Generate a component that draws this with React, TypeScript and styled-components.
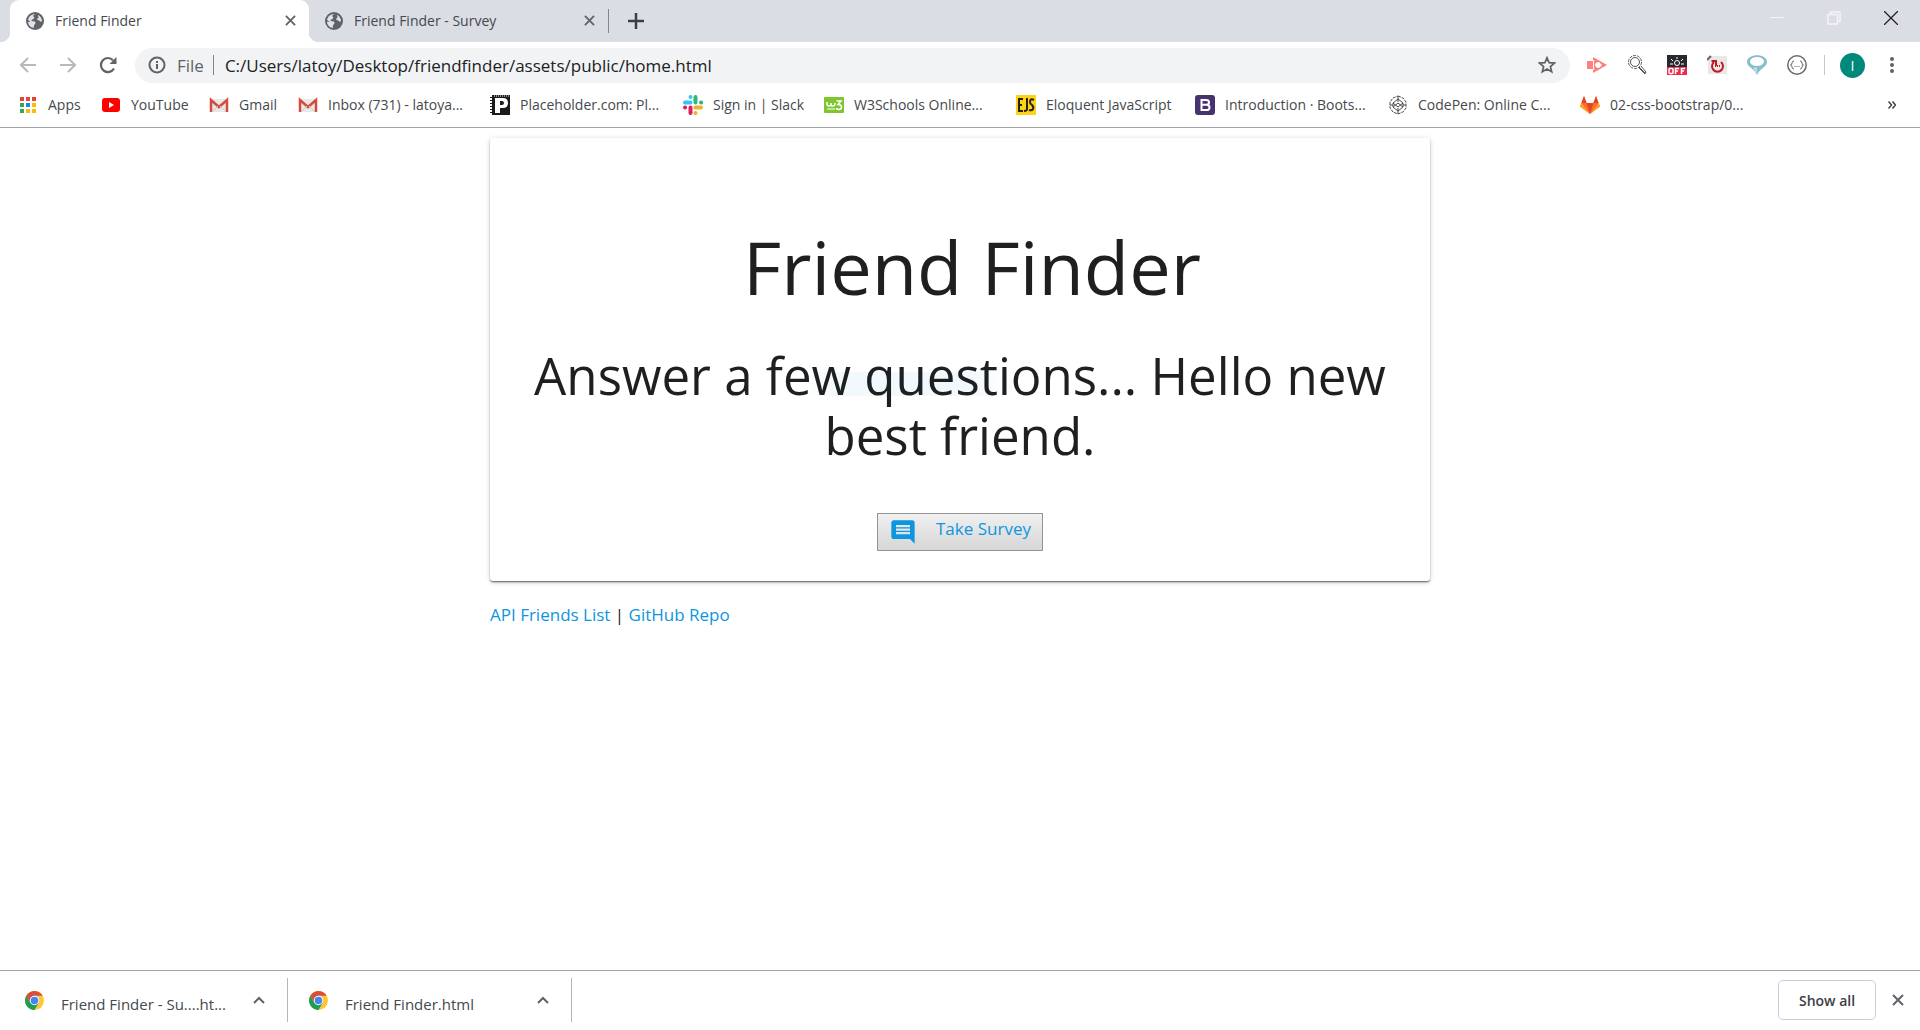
import React from "react";
import styled, { createGlobalStyle } from "styled-components";

const GlobalStyle = createGlobalStyle`
  *, *::before, *::after { box-sizing: border-box; }
  body { margin: 0; background: #fff; }
  body, button, input { font-family: "Open Sans", "Noto Sans", sans-serif; }
  svg { display: block; flex: none; }
  h1, h2 { margin: 0; font-weight: 400; }
`;

const Window = styled.div`
  display: flex;
  flex-direction: column;
  min-height: 100vh;
`;

const IconButton = styled.button<{ $w?: number }>`
  display: flex;
  align-items: center;
  justify-content: center;
  flex: none;
  width: ${(p) => p.$w ?? 40}px;
  height: 28px;
  padding: 0;
  border: 0;
  background: none;
  color: #5f6368;
`;

/* Tab strip */

const TabStrip = styled.header`
  display: flex;
  align-items: center;
  height: 42px;
  padding-left: 10px;
  background: #dadde4;
`;

const Tab = styled.div<{ $active?: boolean }>`
  position: relative;
  display: flex;
  align-items: center;
  width: 299px;
  height: 42px;
  padding: 0 6px 1px 16px;
  border-radius: 9px 9px 0 0;
  background: ${(p) => (p.$active ? "#fff" : "transparent")};
  color: #45494d;
  font-size: 14px;

  &::before,
  &::after {
    content: "";
    display: ${(p) => (p.$active ? "block" : "none")};
    position: absolute;
    bottom: 0;
    width: 9px;
    height: 9px;
  }
  &::before {
    left: -9px;
    background: radial-gradient(circle at 0 0, transparent 9px, #fff 9px);
  }
  &::after {
    right: -9px;
    background: radial-gradient(circle at 100% 0, transparent 9px, #fff 9px);
  }
`;

const TabTitle = styled.span`
  flex: 1;
  margin-left: 11px;
  line-height: 20px;
  white-space: nowrap;
`;

const Divider = styled.span<{ $h: number; $color?: string }>`
  flex: none;
  width: 1px;
  height: ${(p) => p.$h}px;
  background: ${(p) => p.$color ?? "#80868b"};
`;

const WindowControls = styled.div`
  display: flex;
  align-items: center;
  align-self: flex-start;
  margin-left: auto;
  height: 36px;
`;

/* Toolbar */

const Toolbar = styled.div`
  display: flex;
  align-items: center;
  height: 46px;
  padding: 0 8px;
`;

const Omnibox = styled.div`
  display: flex;
  align-items: center;
  flex: 1;
  height: 35px;
  margin: 0 7px;
  padding: 0 3px 0 13px;
  border-radius: 18px;
  background: #f1f3f4;
  color: #5f6368;
  font-size: 17px;
`;

const Scheme = styled.label`
  margin: 0 9px 0 11px;
`;

const Address = styled.input`
  flex: 1;
  min-width: 0;
  padding: 0;
  margin-left: 11px;
  border: 0;
  outline: 0;
  background: none;
  color: #202124;
  font-size: 17px;
`;

const Extensions = styled.div`
  display: flex;
  margin-right: 7px;
`;

const Avatar = styled.button`
  flex: none;
  width: 25px;
  height: 25px;
  margin: 0 7px 0 15px;
  padding: 0;
  border: 0;
  border-radius: 50%;
  background: #00897b;
  color: #fff;
  font-size: 14px;
  line-height: 25px;
`;

/* Bookmarks */

const Bookmarks = styled.nav`
  display: flex;
  align-items: center;
  height: 40px;
  padding: 0 8px 6px 18px;
  border-bottom: 1px solid #a0a5a2;
`;

const Bookmark = styled.a<{ $w: number }>`
  display: flex;
  align-items: center;
  gap: 10px;
  width: ${(p) => p.$w}px;
  color: #45494d;
  font-size: 14px;
  line-height: 20px;
  text-decoration: none;
  white-space: nowrap;
`;

const More = styled(IconButton)`
  margin-left: auto;
`;

/* Page */

const Page = styled.main`
  flex: 1;
  width: 90%;
  max-width: 940px;
  margin: 0 auto;
  padding-top: 10px;
`;

const Card = styled.section`
  position: relative;
  display: flex;
  flex-direction: column;
  align-items: center;
  padding: 84px 24px 30px;
  border-radius: 3px;
  background: #fff;
  box-shadow: 0 2px 2px 0 rgba(0, 0, 0, 0.14), 0 3px 1px -2px rgba(0, 0, 0, 0.12),
    0 1px 5px 0 rgba(0, 0, 0, 0.2), 0 1px 1px rgba(0, 0, 0, 0.3);
  color: #1d1f21;
  text-align: center;
`;

const Title = styled.h1`
  padding-left: 24px;
  font-size: 74px;
  line-height: 90px;
`;

const Tagline = styled.h2`
  margin: 33px 0 48px;
  background: linear-gradient(90deg, #fff, #f2f9fd 15%, #f2f9fd 85%, #fff) no-repeat 290px 27px / 200px 24px;
  font-size: 51px;
  line-height: 60px;
`;

const SurveyButton = styled.button`
  display: flex;
  width: 166px;
  height: 38px;
  padding: 3px 9px;
  border: 1px solid #949494;
  background: linear-gradient(#f0f0f0, #d6d6d6);
  color: #0d96e0;
  font-size: 17px;
  line-height: 24px;
  white-space: nowrap;
`;

const SurveyIcon = styled.svg`
  margin: 1px 19px 0 2px;
`;

const Links = styled.p`
  margin: 22px 0;
  color: #202124;
  font-size: 17px;
  line-height: 24px;
`;

const PageLink = styled.a`
  color: #0d96e0;
  text-decoration: none;
`;

/* Downloads */

const Shelf = styled.footer`
  display: flex;
  align-items: center;
  height: 60px;
  padding-bottom: 1px;
  border-top: 1px solid #9aaa98;
`;

const Download = styled.div`
  display: flex;
  align-items: center;
  width: 284px;
  height: 44px;
  padding: 0 8px 0 21px;
  border-right: 1px solid #b8b4bb;

  &:first-child {
    width: 288px;
    padding-left: 25px;
  }
`;

const FileName = styled.span`
  flex: 1;
  padding: 7px 0 0 17px;
  color: #45494d;
  font-size: 15px;
  line-height: 20px;
  white-space: nowrap;
`;

const ShowAll = styled.button`
  width: 98px;
  height: 40px;
  margin-left: auto;
  border: 1px solid #c5cfdc;
  border-radius: 5px;
  background: #fff;
  color: #3c4043;
  font-size: 14px;
  font-weight: 600;
`;

const GlobeIcon = () => (
  <svg width="18" height="18" viewBox="0 0 18 18">
    <circle cx="9" cy="9" r="9" fill="#5f6368" />
    <path d="M9.500 2C7 2.600 6.800 4 8 5.200c.8.900-.4 1.800-1.600 2.200C5 7.800 5.200 9 6.500 9.200c1.700 0 2.800.3 3 1.500.2 1.400-1.500 1.600-1.600 3.200l-.2 2C4.300 15.500 2 12.700 2 9.800l2.600.2L2.100 8C2.600 4.400 5.800 1.800 9.500 2z" fill="#dfe2e6" />
    <path d="M12 3c2.500 1 4 3.500 4 6-.7 1-1.500.7-2.200 0-.6-.8-2.300-.4-2.600-1.500-.2-1 1.200-1.300 1.400-2.200.1-.8-.9-1.300-.6-2.300z" fill="#dfe2e6" />
  </svg>
);

const CloseIcon = ({ size = 11, stroke = 2 }: { size?: number; stroke?: number }) => (
  <svg width={size} height={size} viewBox="0 0 12 12" fill="none" stroke="currentColor" strokeWidth={stroke}>
    <path d="M1 1l10 10M11 1L1 11" />
  </svg>
);

const ArrowIcon = ({ forward }: { forward?: boolean }) => (
  <svg width="18" height="18" viewBox="0 0 18 18" fill="none" stroke="#b7b9bd" strokeWidth="2">
    <path d={forward ? "M1 9h15M9 2l7 7-7 7" : "M17 9H2M9 2L2 9l7 7"} />
  </svg>
);

const GmailIcon = () => (
  <svg width="20" height="20" viewBox="0 0 20 20">
    <path d="M1 4h18v13H1z" fill="#e8e8e8" />
    <path d="M2 17V5l8 7 8-7v12" fill="none" stroke="#d54b3d" strokeWidth="2.500" />
    <path d="M4 16l5-5M16 16l-5-5" stroke="#ccc" />
  </svg>
);

const appColors = ["#ea4335", "#ea4335", "#ea4335", "#34a853", "#1a86e8", "#fbbc05", "#34a853", "#fbbc05", "#fbbc05"];

const AppsIcon = () => (
  <svg width="20" height="20" viewBox="0 0 20 20">
    {appColors.map((c, i) => (
      <rect key={i} x={2 + (i % 3) * 6} y={2 + Math.floor(i / 3) * 6} width="4" height="4" fill={c} />
    ))}
  </svg>
);

const YouTubeIcon = () => (
  <svg width="20" height="20" viewBox="0 0 20 20">
    <rect x="1" y="3" width="18" height="14" rx="3" fill="#f00" />
    <path d="M8 7v6l5-3z" fill="#fff" />
  </svg>
);

const PlaceholderIcon = () => (
  <svg width="20" height="20" viewBox="0 0 20 20">
    <path d="M0 0h20v20H0z" fill="#1b1b1b" />
    <path d="M1 0v20" stroke="#fff" strokeWidth="2" strokeDasharray="2 1" />
    <path d="M4 1h15" stroke="#fff" strokeDasharray="1 1" />
    <path d="M5 3h8q5 0 5 5t-5 5h-3v5H5z" fill="#fff" />
    <path d="M10 6h2q2 0 2 2t-2 2h-2z" fill="#1b1b1b" />
  </svg>
);

const SlackIcon = () => (
  <svg width="20" height="20" viewBox="0 0 20 20" strokeWidth="4" strokeLinecap="round">
    <path d="M2 7.500h5.500M7.500 2v.1" stroke="#36c5f0" />
    <path d="M12.500 2v5.500M18 7.500h.1" stroke="#2eb67d" />
    <path d="M12.500 12.500H18M12.500 18v.1" stroke="#ecb22e" />
    <path d="M7.500 12.500V18M2 12.500h.1" stroke="#e01e5a" />
  </svg>
);

const W3Icon = () => (
  <svg width="20" height="20" viewBox="0 0 20 20" fill="none" stroke="#fff">
    <rect y="2" width="20" height="16" rx="1" fill="#7fc52e" stroke="none" />
    <path d="M3 7v2q0 2 2 2t2-2V8v1q0 2 2 2t2-3" strokeWidth="1.500" />
    <path d="M12.500 6H17l-3 3.500q3.500 0 3.500 2.500t-2.500 2.500-2.500-1.500" strokeWidth="1.500" />
    <path d="M3 14h8" strokeWidth="1" />
  </svg>
);

const EjsIcon = () => (
  <svg width="20" height="20" viewBox="0 0 20 20" fill="none" stroke="#27230a" strokeWidth="2">
    <path d="M0 0h20v20H0z" fill="#fdd31a" stroke="none" />
    <path d="M7 4H3v12h4M3 10h3M11 3v11q0 2-3 2M18 5q-4-2-4 2 0 2 2 3 2 2 1 4-1 2-4 1" />
  </svg>
);

const BootstrapIcon = () => (
  <svg width="20" height="20" viewBox="0 0 20 20">
    <rect width="20" height="20" rx="3" fill="#46326f" />
    <path d="M6.500 5H11q3 0 3 2.400T11 9.800H6.500zm0 4.800h5q3 0 3 2.600T11.500 15h-5z" fill="none" stroke="#fff" strokeWidth="2" />
  </svg>
);

const CodePenIcon = () => (
  <svg width="20" height="20" viewBox="0 0 20 20" fill="none" stroke="#4a4a4a">
    <path d="M10 1l5 2 3 4v6l-3 4-5 2-5-2-3-4V7l3-4z" strokeDasharray="3 1" />
    <path d="M10 4l5 4v4l-5 4-5-4V8zM10 1v6M10 13v6M5 8l5 4 5-4M5 12l5-4 5 4M2 10h3M15 10h3" />
  </svg>
);

const GitLabIcon = () => (
  <svg width="20" height="20" viewBox="0 0 20 20">
    <path d="M10 19L0 11.500 4 1l2.600 7h6.800L16 1l4 10.500z" fill="#fc6d26" />
    <path d="M10 19L6.600 8h6.800z" fill="#e24329" />
    <path d="M10 19L0 11.500 1.500 8zM10 19l10-7.500L18.500 8z" fill="#fca326" />
    <path d="M1.500 8L4 1l2.600 7zM13.400 8L16 1l2.500 7z" fill="#e24329" />
  </svg>
);

const ChromeIcon = () => (
  <svg width="19" height="19" viewBox="0 0 20 20">
    <circle cx="10" cy="10" r="10" fill="#fcc934" />
    <path d="M10 10L5.670 12.500 1.340 5A10 10 0 0 1 18.660 5H10z" fill="#d94f3d" />
    <path d="M1.340 5A10 10 0 0 0 10 20l4.330-7.500L10 10l-4.330 2.500z" fill="#1e9e54" />
    <circle cx="10" cy="10" r="5" fill="#fff" />
    <circle cx="10" cy="10" r="4" fill="#4385f5" />
  </svg>
);

const bookmarks: { label: string; w: number; Icon: () => React.JSX.Element }[] = [
  { label: "Apps", w: 83, Icon: AppsIcon },
  { label: "YouTube", w: 108, Icon: YouTubeIcon },
  { label: "Gmail", w: 89, Icon: GmailIcon },
  { label: "Inbox (731) - latoya...", w: 192, Icon: GmailIcon },
  { label: "Placeholder.com: Pl...", w: 193, Icon: PlaceholderIcon },
  { label: "Sign in | Slack", w: 141, Icon: SlackIcon },
  { label: "W3Schools Online...", w: 192, Icon: W3Icon },
  { label: "Eloquent JavaScript", w: 179, Icon: EjsIcon },
  { label: "Introduction · Boots...", w: 193, Icon: BootstrapIcon },
  { label: "CodePen: Online C...", w: 192, Icon: CodePenIcon },
  { label: "02-css-bootstrap/0...", w: 192, Icon: GitLabIcon },
];

const extensions = [
  {
    name: "Screencast",
    art: (
      <g fill="#ff7f7d">
        <path d="M0 6h6v8H0z" />
        <path fillRule="evenodd" d="M6 2l14 8-14 8v-3l2-1H7V6h1L6 5zM9 8q-2 2 0 4 1 1 3 1l3-3-3-3q-2 0-3 1z" />
      </g>
    ),
  },
  {
    name: "Search",
    art: (
      <g fill="none" stroke="#555">
        <circle cx="8" cy="7" r="6.500" strokeDasharray="3 1" />
        <circle cx="8" cy="7" r="4.500" />
        <path d="M12 12l6 6M14 11l5 6-1 2-6-6" />
      </g>
    ),
  },
  {
    name: "Lights off",
    art: (
      <g>
        <path d="M0 0h20v12H0z" fill="#262a2e" />
        <path d="M0 12h20v8H0z" fill="#f0284e" />
        <circle cx="10" cy="8" r="2.500" fill="none" stroke="#fff" />
        <path d="M10 2v2M4 4l2 2M16 4l-2 2M3 9h3M14 9h3" stroke="#fff" />
        <g fill="none" stroke="#fff" strokeWidth="1.500">
          <rect x="2" y="13.500" width="4" height="5" rx="1" />
          <path d="M8.500 19v-5.500H12M8.500 16H11M14.500 19v-5.500H18M14.500 16H17" />
        </g>
      </g>
    ),
  },
  {
    name: "PDF",
    art: (
      <g fill="none">
        <path d="M4 1h16v18H1V4z" fill="#e9e7e7" />
        <path d="M0 5l4-4" stroke="#666" strokeWidth="2" />
        <path d="M14 7a5.500 5.500 0 1 1-7 0M4.500 6H9v5" stroke="#c01722" strokeWidth="2" />
        <path d="M8 11h5" stroke="#c01722" strokeWidth="2" strokeDasharray="1 1" />
      </g>
    ),
  },
  {
    name: "Speech",
    art: (
      <g>
        <path d="M0 7c0-9 20-9 20 0 0 5-7 6-10 13C7 13 0 12 0 7z" fill="#86bfcb" />
        <ellipse cx="10" cy="6.500" rx="7" ry="4.500" fill="#fff" />
        <path d="M10 12v8l-4-7z" fill="#b8dde5" />
      </g>
    ),
  },
  {
    name: "JSON",
    art: (
      <g fill="none" stroke="#666a6e">
        <circle cx="10" cy="10" r="9.200" strokeWidth="1.500" />
        <path d="M7 6q-2 0-2 2t-1.500 2Q5 10 5 12t2 2M13 6q2 0 2 2t1.500 2Q15 10 15 12t-2 2" />
        <path d="M7.500 11.500h5" strokeDasharray="1 1" />
      </g>
    ),
  },
];

const downloads = ["Friend Finder - Su....ht...", "Friend Finder.html"];

export default function App() {
  return (
    <Window>
      <GlobalStyle />
      <TabStrip>
        <Tab $active>
          <GlobeIcon />
          <TabTitle>Friend Finder</TabTitle>
          <IconButton $w={26} aria-label="Close tab"><CloseIcon /></IconButton>
        </Tab>
        <Tab>
          <GlobeIcon />
          <TabTitle>Friend Finder - Survey</TabTitle>
          <IconButton $w={26} aria-label="Close tab"><CloseIcon /></IconButton>
        </Tab>
        <Divider $h={24} />
        <IconButton $w={54} aria-label="New tab">
          <svg width="16" height="16" viewBox="0 0 16 16" stroke="#3c4043" strokeWidth="2.500">
            <path d="M8 0v16M0 8h16" />
          </svg>
        </IconButton>
        <WindowControls>
          <IconButton $w={56} aria-label="Minimize">
            <svg width="14" height="14" viewBox="0 0 14 14" stroke="#f4f5f7"><path d="M0 6.500h14" /></svg>
          </IconButton>
          <IconButton $w={57} aria-label="Restore">
            <svg width="14" height="14" viewBox="0 0 14 14" fill="none" stroke="#f4f5f7" strokeWidth="1.500">
              <path d="M1 3.500h9.500V13H1zM3.500 3V1H13v9.500h-2" />
            </svg>
          </IconButton>
          <IconButton $w={58} aria-label="Close window">
            <svg width="14" height="14" viewBox="0 0 14 14" stroke="#222" strokeWidth="1.300"><path d="M0 0l14 14M14 0L0 14" /></svg>
          </IconButton>
        </WindowControls>
      </TabStrip>

      <Toolbar>
        <IconButton aria-label="Back"><ArrowIcon /></IconButton>
        <IconButton aria-label="Forward"><ArrowIcon forward /></IconButton>
        <IconButton aria-label="Reload">
          <svg width="18" height="18" viewBox="0 0 18 18">
            <path d="M15 12.500A7 7 0 1 1 14 4.200" fill="none" stroke="#5f6368" strokeWidth="2.200" />
            <path d="M17.500 1v7h-7z" fill="#5f6368" />
          </svg>
        </IconButton>
        <Omnibox>
          <svg width="18" height="18" viewBox="0 0 18 18" fill="none" stroke="#5f6368" strokeWidth="2">
            <circle cx="9" cy="9" r="7.500" />
            <path d="M9 8v5M9 5v2" />
          </svg>
          <Scheme htmlFor="address">File</Scheme>
          <Divider $h={20} />
          <Address id="address" defaultValue="C:/Users/latoy/Desktop/friendfinder/assets/public/home.html" />
          <IconButton aria-label="Bookmark this page">
            <svg width="18" height="18" viewBox="0 0 18 18" fill="none" stroke="#5f6368" strokeWidth="1.700">
              <path d="M9 1.800l2.100 4.900 5.400.4-4.100 3.500 1.300 5.200L9 13l-4.700 2.800 1.300-5.200L1.500 7.100l5.400-.4z" />
            </svg>
          </IconButton>
        </Omnibox>
        <Extensions>
          {extensions.map((e) => (
            <IconButton key={e.name} aria-label={e.name}>
              <svg width="20" height="20" viewBox="0 0 20 20">{e.art}</svg>
            </IconButton>
          ))}
        </Extensions>
        <Divider $h={20} $color="#c4c6c9" />
        <Avatar aria-label="Profile">I</Avatar>
        <IconButton aria-label="Menu">
          <svg width="4" height="16" viewBox="0 0 4 16" fill="#5f6368">
            <circle cx="2" cy="2" r="2" /><circle cx="2" cy="8" r="2" /><circle cx="2" cy="14" r="2" />
          </svg>
        </IconButton>
      </Toolbar>

      <Bookmarks aria-label="Bookmarks">
        {bookmarks.map(({ label, w, Icon }) => (
          <Bookmark key={label} href="#" $w={w}>
            <Icon />
            {label}
          </Bookmark>
        ))}
        <More aria-label="More bookmarks">
          <svg width="8" height="8" viewBox="0 0 8 8" fill="none" stroke="#3c4043" strokeWidth="1.500">
            <path d="M.5.500L3.500 4l-3 3.500M4.500.500l3 3.500-3 3.500" />
          </svg>
        </More>
      </Bookmarks>

      <Page>
        <Card>
          <Title>Friend Finder</Title>
          <Tagline>Answer a few questions... Hello new best friend.</Tagline>
          <SurveyButton>
            <SurveyIcon width="28" height="28" viewBox="0 0 24 24" fill="#0d96e0">
              <path d="M21.990 4c0-1.100-.89-2-1.990-2H4c-1.100 0-2 .9-2 2v12c0 1.100.9 2 2 2h14l4 4-.01-18zM18 14H6v-2h12v2zm0-3H6V9h12v2zm0-3H6V6h12v2z" />
            </SurveyIcon>
            Take Survey
          </SurveyButton>
        </Card>
        <Links>
          <PageLink href="#">API Friends List</PageLink> | <PageLink href="#">GitHub Repo</PageLink>
        </Links>
      </Page>

      <Shelf>
        {downloads.map((name) => (
          <Download key={name}>
            <ChromeIcon />
            <FileName>{name}</FileName>
            <IconButton aria-label={`Options for ${name}`}>
              <svg width="12" height="8" viewBox="0 0 12 8" fill="none" stroke="#5f6368" strokeWidth="2">
                <path d="M1 7l5-5 5 5" />
              </svg>
            </IconButton>
          </Download>
        ))}
        <ShowAll>Show all</ShowAll>
        <IconButton $w={44} aria-label="Close downloads"><CloseIcon size={12} /></IconButton>
      </Shelf>
    </Window>
  );
}
